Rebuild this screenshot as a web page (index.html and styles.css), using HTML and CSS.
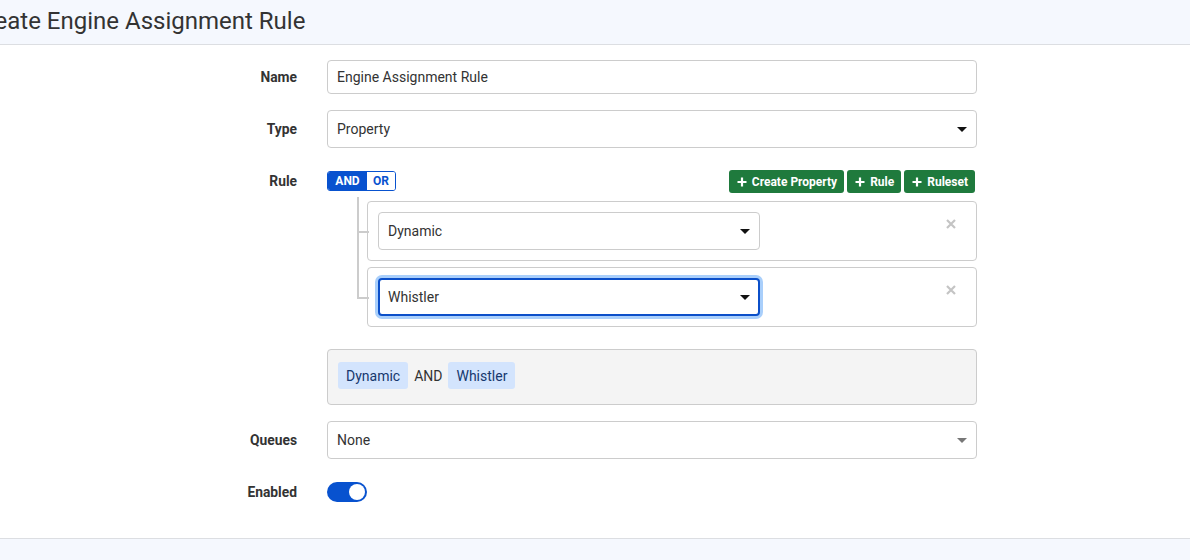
FILE: index.html
```html
<!DOCTYPE html>
<html>
<head>
<meta charset="utf-8">
<link rel="stylesheet" href="styles.css">
</head>
<body>
<header class="page-header">
  <h1 class="page-title">Create Engine Assignment Rule</h1>
</header>
<main class="page-main">
  <div class="form">
    <div class="form-row row-name">
      <label class="form-label">Name</label>
      <div class="form-field">
        <div class="input">Engine Assignment Rule</div>
      </div>
    </div>
    <div class="form-row row-type">
      <label class="form-label">Type</label>
      <div class="form-field">
        <div class="select"><span>Property</span><span class="caret"></span></div>
      </div>
    </div>
    <div class="form-row row-rule">
      <label class="form-label label-rule">Rule</label>
      <div class="form-field">
        <div class="group-header">
          <div class="conj">
            <span class="conj-btn active">AND</span><span class="conj-btn">OR</span>
          </div>
          <div class="actions">
            <button class="btn-green"><svg width="10" height="10" viewBox="0 0 10 10"><path d="M5 0.5V9.5M0.5 5H9.5" stroke="#fff" stroke-width="2.2"/></svg>Create Property</button>
            <button class="btn-green"><svg width="10" height="10" viewBox="0 0 10 10"><path d="M5 0.5V9.5M0.5 5H9.5" stroke="#fff" stroke-width="2.2"/></svg>Rule</button>
            <button class="btn-green"><svg width="10" height="10" viewBox="0 0 10 10"><path d="M5 0.5V9.5M0.5 5H9.5" stroke="#fff" stroke-width="2.2"/></svg>Ruleset</button>
          </div>
        </div>
        <div class="rules">
          <div class="rule">
            <div class="select select-rule"><span>Dynamic</span><span class="caret"></span></div>
            <span class="remove"><svg width="10" height="10" viewBox="0 0 10 10"><path d="M1 1L9 9M9 1L1 9" stroke="#c4c4c4" stroke-width="2.2"/></svg></span>
          </div>
          <div class="rule">
            <div class="select select-rule focused"><span>Whistler</span><span class="caret"></span></div>
            <span class="remove"><svg width="10" height="10" viewBox="0 0 10 10"><path d="M1 1L9 9M9 1L1 9" stroke="#c4c4c4" stroke-width="2.2"/></svg></span>
          </div>
        </div>
      </div>
    </div>
    <div class="form-row row-summary">
      <div class="form-label"></div>
      <div class="form-field">
        <div class="summary">
          <span class="tag">Dynamic</span><span class="op">AND</span><span class="tag">Whistler</span>
        </div>
      </div>
    </div>
    <div class="form-row row-queues">
      <label class="form-label">Queues</label>
      <div class="form-field">
        <div class="select"><span>None</span><span class="caret caret-muted"></span></div>
      </div>
    </div>
    <div class="form-row row-enabled">
      <label class="form-label">Enabled</label>
      <div class="form-field">
        <span class="toggle"><span class="knob"></span></span>
      </div>
    </div>
  </div>
</main>
<footer class="page-footer"></footer>
</body>
</html>
```

FILE: styles.css
```css
* { box-sizing: border-box; }
html, body { margin: 0; padding: 0; }
body {
  font-family: Roboto, "Liberation Sans", Arial, sans-serif;
  color: #333;
  background: #fff;
  width: 1190px;
  height: 560px;
  overflow: hidden;
  display: flex;
  flex-direction: column;
}
.page-header {
  height: 45px;
  background: #f5f8fe;
  border-bottom: 1px solid #dcdee2;
  display: flex;
  align-items: center;
  flex-shrink: 0;
  overflow: hidden;
}
.page-title {
  margin: 0 0 0 -29px;
  font-size: 24px;
  font-weight: 400;
  color: #333;
  white-space: nowrap;
  line-height: 1;
  padding-bottom: 3px;
}
.page-main {
  flex: 1;
  padding-top: 15px;
}
.page-footer {
  height: 22px;
  flex-shrink: 0;
  background: #f5f8fe;
  border-top: 1px solid #dcdee2;
}
.form {
  margin-left: 127px;
  width: 850px;
}
.form-row {
  display: flex;
  align-items: center;
}
.form-label {
  width: 170px;
  margin-right: 30px;
  text-align: right;
  font-size: 13.8px;
  font-weight: 700;
  color: #333;
  flex-shrink: 0;
}
.form-field { width: 650px; }
.row-type { margin-top: 16px; }
.row-rule { margin-top: 22px; align-items: flex-start; }
.label-rule { line-height: 23px; }
.row-summary { margin-top: 22px; }
.row-queues { margin-top: 16px; }
.row-enabled { margin-top: 23px; }

.input, .select {
  height: 38px;
  border: 1px solid #ccc;
  border-radius: 4px;
  padding: 0 9px;
  font-size: 14px;
  color: #333;
  display: flex;
  align-items: center;
  background: #fff;
}
.input { height: 34px; }
.select { justify-content: space-between; }
.caret {
  width: 0;
  height: 0;
  border-left: 5px solid transparent;
  border-right: 5px solid transparent;
  border-top: 5px solid #111;
}
.caret-muted { border-top-color: #777; }

.group-header {
  height: 23px;
  display: flex;
  justify-content: space-between;
  align-items: center;
}
.conj {
  display: flex;
  height: 20px;
  margin-top: -2px;
  border: 1px solid #0852cf;
  border-radius: 3px;
  overflow: hidden;
}
.conj-btn {
  font-size: 12px;
  font-weight: 700;
  color: #0852cf;
  background: #fff;
  display: flex;
  align-items: center;
  justify-content: center;
  line-height: 1;
  width: 28px;
}
.conj-btn.active {
  background: #0852cf;
  color: #fff;
  width: 39px;
}
.actions {
  display: flex;
  gap: 3px;
  margin-right: 2px;
}
.btn-green {
  height: 23px;
  border: none;
  border-radius: 3px;
  background: #1f7a3d;
  color: #fff;
  font-family: inherit;
  font-size: 12px;
  font-weight: 700;
  padding: 0 7px 0 8px;
  display: flex;
  align-items: center;
  gap: 5px;
  cursor: pointer;
}
.rules {
  margin-top: 8px;
  padding-left: 40px;
  display: flex;
  flex-direction: column;
  gap: 6px;
}
.rule {
  position: relative;
  height: 60px;
  border: 1px solid #ccc;
  border-radius: 4px;
  padding: 10px;
  display: flex;
  align-items: flex-start;
  justify-content: space-between;
}
.rule::before {
  content: "";
  position: absolute;
  left: -11px;
  top: -8px;
  width: 10px;
  height: calc(50% + 8px);
  border-left: 2px solid #ccc;
  border-bottom: 2px solid #ccc;
}
.rule:first-child::before {
  top: -5px;
  height: calc(50% + 5px);
}
.rule:not(:last-child)::after {
  content: "";
  position: absolute;
  left: -11px;
  top: 50%;
  bottom: -8px;
  border-left: 2px solid #ccc;
}
.select-rule {
  width: 382px;
}
.select-rule.focused {
  border: 2px solid #0b4fc9;
  padding-left: 8px;
  padding-right: 8px;
  box-shadow: 0 0 0 3px #a9cffb;
}
.remove {
  display: flex;
  margin-top: 7px;
  margin-right: 10px;
}
.summary {
  height: 56px;
  background: #f4f4f4;
  border: 1px solid #ccc;
  border-radius: 4px;
  padding: 0 10px 3px;
  display: flex;
  align-items: center;
  font-size: 14px;
}
.tag {
  background: #d3e4fd;
  color: #16386e;
  border-radius: 3px;
  height: 27px;
  padding: 0 8px;
  display: flex;
  align-items: center;
}
.op { margin: 0 6px; color: #333; }
.toggle {
  display: flex;
  width: 40px;
  height: 20px;
  border-radius: 10px;
  background: #0852cf;
  align-items: center;
  justify-content: flex-end;
  padding: 2px;
}
.knob {
  width: 16px;
  height: 16px;
  border-radius: 50%;
  background: #fff;
}
```
